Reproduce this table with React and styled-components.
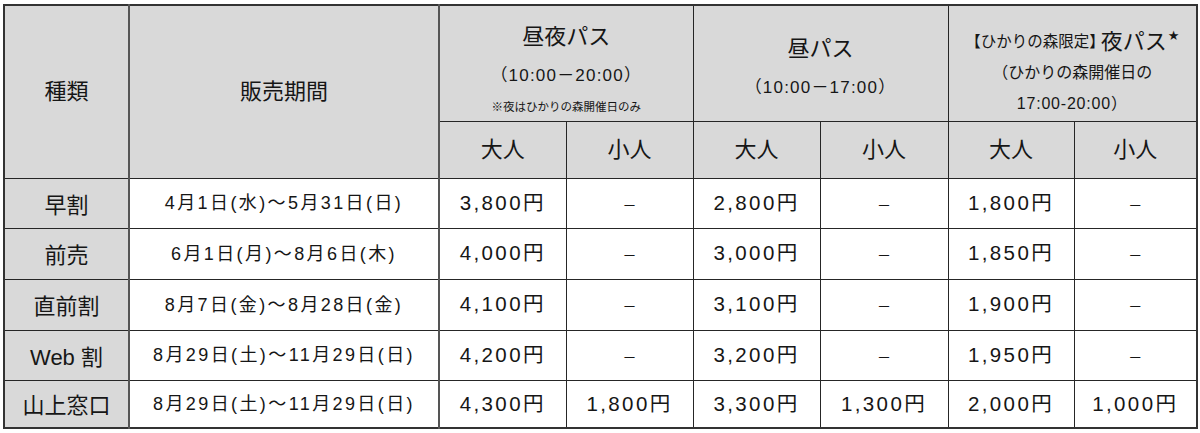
import React from 'react';
import styled, { createGlobalStyle } from 'styled-components';

const GlobalStyle = createGlobalStyle`
  html, body {
    margin: 0;
    padding: 0;
    background: #ffffff;
  }
  body {
    font-family: "Liberation Sans", "Noto Sans CJK JP", sans-serif;
    color: #161616;
  }
`;

const Page = styled.div`
  padding: 4px 3px 0 3px;
`;

const PriceTable = styled.table`
  width: 1193px;
  table-layout: fixed;
  border-collapse: collapse;
  border: 2px solid #333;
`;

const Row = styled.tr`
  height: ${(p) => p.$h}px;
`;

const Cell = styled.td`
  border: 1px solid #262626;
  padding: 0;
  text-align: center;
  vertical-align: middle;
  white-space: nowrap;
  line-height: 1;
`;

const HeadCell = styled(Cell)`
  background: #d9d9d9;
  font-size: 22px;
  vertical-align: ${(p) => (p.$pt !== undefined ? 'top' : 'middle')};
  padding-top: ${(p) => p.$pt || 0}px;
  border-right-width: ${(p) => (p.$thick ? 2 : 1)}px;
  border-right-color: ${(p) => (p.$thick ? '#555' : '#262626')};
`;

const LabelCell = styled(Cell)`
  background: #d9d9d9;
  font-size: 22px;
  padding-top: 5px;
  border-right: 2px solid #555;
`;

const PeriodCell = styled(Cell)`
  font-size: 18px;
  letter-spacing: 2.4px;
  border-right: 2px solid #555;
`;

const PriceCell = styled(Cell)`
  font-size: 20.5px;
  letter-spacing: 2.4px;
`;

const Dash = styled.span`
  font-size: 14px;
  letter-spacing: 0;
`;

const Line = styled.div`
  font-size: ${(p) => p.$size}px;
  line-height: ${(p) => p.$lh}px;
  height: ${(p) => p.$lh}px;
  letter-spacing: ${(p) => p.$ls || 0}px;
`;

const Bracket = styled.span`
  font-size: 15.5px;
  vertical-align: 2px;
  margin-right: -4px;
`;

const Star = styled.sup`
  font-size: 13px;
  vertical-align: 9px;
  margin-left: 1px;
  font-family: "DejaVu Sans", sans-serif;
`;

const rows = [
  { label: '早割', period: '4月1日(水)～5月31日(日)', prices: ['3,800円', null, '2,800円', null, '1,800円', null] },
  { label: '前売', period: '6月1日(月)～8月6日(木)', prices: ['4,000円', null, '3,000円', null, '1,850円', null] },
  { label: '直前割', period: '8月7日(金)～8月28日(金)', prices: ['4,100円', null, '3,100円', null, '1,900円', null] },
  { label: 'Web 割', period: '8月29日(土)～11月29日(日)', prices: ['4,200円', null, '3,200円', null, '1,950円', null] },
  { label: '山上窓口', period: '8月29日(土)～11月29日(日)', prices: ['4,300円', '1,800円', '3,300円', '1,300円', '2,000円', '1,000円'] },
];

const rowHeights = [50, 51, 51, 50, 48];
const widths = [125, 310, 127, 127, 127, 128, 126, 123];

export default function App() {
  return (
    <Page>
      <GlobalStyle />
      <PriceTable>
        <colgroup>
          {widths.map((w, i) => (
            <col key={i} style={{ width: w }} />
          ))}
        </colgroup>
        <thead>
          <Row $h={116}>
            <HeadCell rowSpan={2} $thick>
              <Line $size={22} $lh={22}>種類</Line>
            </HeadCell>
            <HeadCell rowSpan={2} $thick>
              <Line $size={22} $lh={22}>販売期間</Line>
            </HeadCell>
            <HeadCell colSpan={2} $pt={12}>
              <Line $size={22} $lh={38}>昼夜パス</Line>
              <Line $size={17} $lh={40} $ls={1.2}>（10:00－20:00）</Line>
              <Line $size={11.5} $lh={22}>※夜はひかりの森開催日のみ</Line>
            </HeadCell>
            <HeadCell colSpan={2} $pt={24}>
              <Line $size={22} $lh={38}>昼パス</Line>
              <Line $size={17} $lh={40} $ls={1.2}>（10:00－17:00）</Line>
            </HeadCell>
            <HeadCell colSpan={2} $pt={11}>
              <Line $size={22} $lh={38}>
                <Bracket>【ひかりの森限定】</Bracket>夜パス<Star>★</Star>
              </Line>
              <Line $size={16} $lh={36}>（ひかりの森開催日の</Line>
              <Line $size={16} $lh={26} $ls={0.8}>17:00-20:00）</Line>
            </HeadCell>
          </Row>
          <Row $h={57}>
            <HeadCell>大人</HeadCell>
            <HeadCell>小人</HeadCell>
            <HeadCell>大人</HeadCell>
            <HeadCell>小人</HeadCell>
            <HeadCell>大人</HeadCell>
            <HeadCell>小人</HeadCell>
          </Row>
        </thead>
        <tbody>
          {rows.map((r, i) => (
            <Row key={r.label} $h={rowHeights[i]}>
              <LabelCell>{r.label}</LabelCell>
              <PeriodCell>{r.period}</PeriodCell>
              {r.prices.map((p, j) => (
                <PriceCell key={j}>{p || <Dash>－</Dash>}</PriceCell>
              ))}
            </Row>
          ))}
        </tbody>
      </PriceTable>
    </Page>
  );
}
